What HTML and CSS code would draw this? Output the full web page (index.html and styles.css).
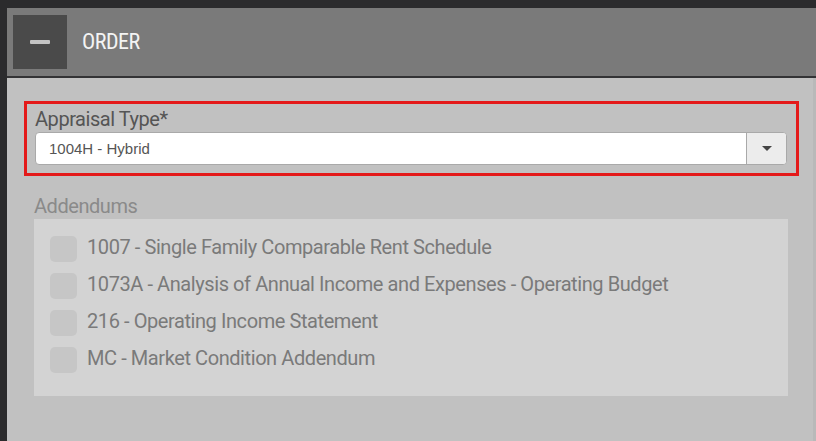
FILE: index.html
```html
<!DOCTYPE html>
<html>
<head>
<meta charset="utf-8">
<link rel="stylesheet" href="styles.css">
</head>
<body>
<div class="frame">
  <div class="header">
    <div class="toggle"><span class="minus"></span></div>
    <div class="title">ORDER</div>
  </div>
  <div class="content">
    <div class="highlight">
      <div class="label">Appraisal Type*</div>
      <div class="select">
        <div class="value">1004H - Hybrid</div>
        <div class="arrow"><span class="caret"></span></div>
      </div>
    </div>
    <div class="label muted">Addendums</div>
    <div class="addenda">
      <div class="row"><span class="check"></span><span class="text">1007 - Single Family Comparable Rent Schedule</span></div>
      <div class="row"><span class="check"></span><span class="text">1073A - Analysis of Annual Income and Expenses - Operating Budget</span></div>
      <div class="row"><span class="check"></span><span class="text">216 - Operating Income Statement</span></div>
      <div class="row"><span class="check"></span><span class="text">MC - Market Condition Addendum</span></div>
    </div>
  </div>
</div>
</body>
</html>
```
FILE: styles.css
```css
* { box-sizing: border-box; }
html, body { margin: 0; height: 100%; }
body {
  background: #2b2b2d;
  font-family: Roboto, "Noto Sans", sans-serif;
  overflow: hidden;
}
.frame {
  padding: 8px 0 0 7px;
  height: 100%;
  display: flex;
  flex-direction: column;
}
.header {
  height: 70px;
  background: #7a7a7a;
  border-bottom: 2px solid #333335;
  display: flex;
  align-items: flex-start;
  padding: 7px 0 0 6px;
}
.toggle {
  width: 54px;
  height: 54px;
  background: #4a4a4a;
  display: flex;
  align-items: center;
  justify-content: center;
}
.minus {
  width: 20px;
  height: 4px;
  background: #c4c4c4;
  border-radius: 1px;
}
.title {
  margin-left: 15px;
  align-self: center;
  margin-top: -8px;
  color: #f4f4f4;
  font-size: 22px;
  font-stretch: 85%;
  letter-spacing: -0.5px;
}
.content {
  flex: 1;
  background: #c1c1c1;
  padding: 23px 25px 0 27px;
  border-right: 3px solid #b9b9b9;
}
.highlight {
  margin: 0 -11px 0 -10px;
  border: 3px solid #e41a1a;
  padding: 3px 9px 8px 8px;
}
.label {
  font-size: 20px;
  line-height: 24px;
  color: #555;
  letter-spacing: -0.45px;
  margin-bottom: 1px;
}
.label.muted {
  margin-top: 18px;
  color: #8a8a8a;
}
.select {
  height: 33px;
  background: #fff;
  border: 1px solid #a9a9a9;
  border-radius: 4px;
  display: flex;
  overflow: hidden;
}
.value {
  flex: 1;
  padding-left: 13px;
  font-family: "Liberation Sans", Arial, sans-serif;
  font-size: 15px;
  line-height: 31px;
  color: #555;
}
.arrow {
  width: 40px;
  background: #ececec;
  border-left: 1px solid #a9a9a9;
  display: flex;
  align-items: center;
  justify-content: center;
}
.caret {
  width: 0;
  height: 0;
  border-left: 5px solid transparent;
  border-right: 5px solid transparent;
  border-top: 5px solid #444;
}
.addenda {
  background: #d3d3d3;
  padding: 11px 0 18px 16px;
}
.row {
  height: 37px;
  display: flex;
  align-items: center;
}
.check {
  width: 27px;
  height: 26px;
  background: #c6c6c6;
  border-radius: 5px;
  flex: none;
}
.text {
  margin-left: 10px;
  margin-top: -4px;
  font-size: 20px;
  color: #7a7a7a;
  letter-spacing: -0.42px;
}
```
